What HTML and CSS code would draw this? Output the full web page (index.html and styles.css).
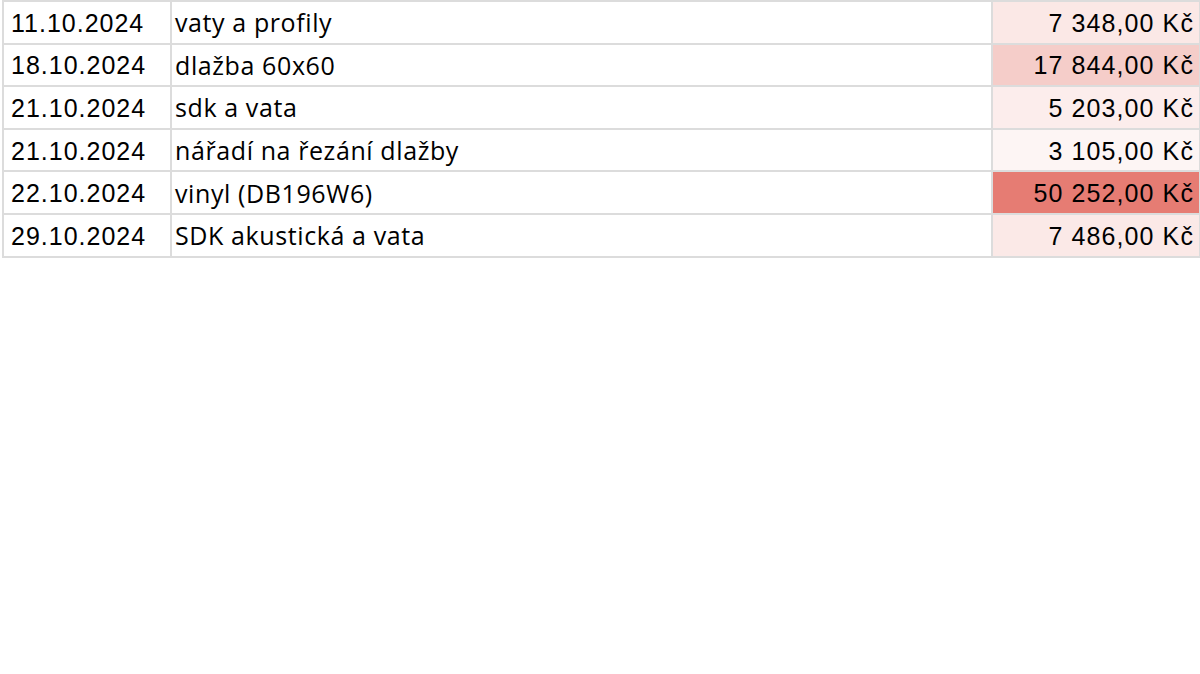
FILE: index.html
```html
<!DOCTYPE html>
<html lang="cs">
<head>
<meta charset="utf-8">
<title>Náklady</title>
<link rel="stylesheet" href="styles.css">
</head>
<body>
<table class="sheet">
  <colgroup>
    <col class="c-date">
    <col class="c-desc">
    <col class="c-amt">
  </colgroup>
  <tbody>
    <tr><td class="date">11.10.2024</td><td class="desc">vaty a profily</td><td class="amt s1">7 348,00 Kč</td></tr>
    <tr><td class="date">18.10.2024</td><td class="desc">dlažba 60x60</td><td class="amt s2">17 844,00 Kč</td></tr>
    <tr><td class="date">21.10.2024</td><td class="desc">sdk a vata</td><td class="amt s3">5 203,00 Kč</td></tr>
    <tr><td class="date">21.10.2024</td><td class="desc">nářadí na řezání dlažby</td><td class="amt s4">3 105,00 Kč</td></tr>
    <tr><td class="date">22.10.2024</td><td class="desc">vinyl (DB196W6)</td><td class="amt s5">50 252,00 Kč</td></tr>
    <tr><td class="date">29.10.2024</td><td class="desc">SDK akustická a vata</td><td class="amt s6">7 486,00 Kč</td></tr>
  </tbody>
</table>
</body>
</html>
```
FILE: styles.css
```css
html, body {
  margin: 0;
  padding: 0;
  background: #ffffff;
}
.sheet {
  border-collapse: collapse;
  margin-left: 2px;
  table-layout: fixed;
  width: 1197px;
  color: #000000;
}
.c-date { width: 168px; }
.c-desc { width: 821px; }
.c-amt { width: 208px; }
.sheet td {
  border: 2px solid #dcdcdc;
  height: 38.6px;
  padding: 2px 0 0 0;
  vertical-align: middle;
  white-space: nowrap;
  overflow: hidden;
}
.sheet td.date {
  font-family: "Liberation Sans", Arial, sans-serif;
  font-size: 25px;
  letter-spacing: 1px;
  padding-left: 7px;
}
.sheet td.desc {
  font-family: "Open Sans", sans-serif;
  font-size: 25px;
  letter-spacing: 0.6px;
  padding-left: 3px;
  padding-top: 0;
}
.sheet td.amt {
  font-family: "Liberation Sans", Arial, sans-serif;
  font-size: 25px;
  letter-spacing: 1.1px;
  text-align: right;
  padding-right: 5px;
}
.s1 { background: #fbe8e6; }
.s2 { background: #f5cdc9; }
.s3 { background: #fcedec; }
.s4 { background: #fdf5f4; }
.s5 { background: #e67c73; }
.s6 { background: #fbe9e7; }
```
